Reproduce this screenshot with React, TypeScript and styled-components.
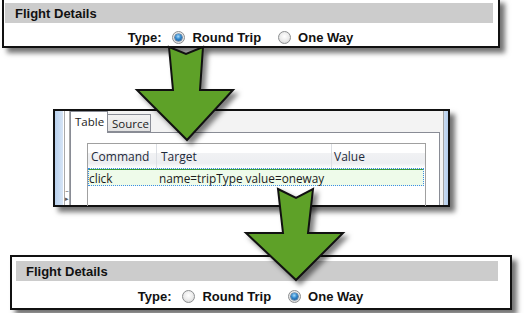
import React from "react";
import styled, { createGlobalStyle } from "styled-components";

const Global = createGlobalStyle`
  html, body { margin: 0; padding: 0; background: #fff; }
  body { width: 529px; height: 313px; overflow: hidden; }
`;

const Canvas = styled.div`
  position: relative;
  width: 529px;
  height: 313px;
  overflow: hidden;
  display: flex;
  flex-direction: column;
  align-items: flex-start;
  background: #fff;
`;

const FormPanel = styled.div<{ $left: number; $width: number; $top: number }>`
  box-sizing: border-box;
  margin-left: ${(p) => p.$left}px;
  margin-top: ${(p) => p.$top}px;
  width: ${(p) => p.$width}px;
  border: 2px solid #111;
  background: #fff;
  box-shadow: 5px 5px 5px rgba(0, 0, 0, 0.55);
  display: flex;
  flex-direction: column;
  font-family: "Liberation Sans", Arial, sans-serif;
  font-weight: bold;
  font-size: 13px;
  color: #111;
`;

const SectionHeader = styled.div<{ $ml: number; $mr: number; $mt: number }>`
  margin: ${(p) => p.$mt}px ${(p) => p.$mr}px 0 ${(p) => p.$ml}px;
  height: 20px;
  background: #cccccc;
  display: flex;
  align-items: center;
  padding-left: 10px;
`;

const TypeRow = styled.div<{ $pt: number; $pb: number }>`
  display: flex;
  align-items: center;
  justify-content: center;
  padding: ${(p) => p.$pt}px 21px ${(p) => p.$pb}px 0;
  height: 17px;
`;

const Label = styled.span`
  margin-right: 11px;
`;

const Choice = styled.label`
  display: flex;
  align-items: center;
  gap: 7px;
  & + & {
    margin-left: 17px;
  }
`;

const Radio = styled.span<{ $checked?: boolean }>`
  position: relative;
  box-sizing: border-box;
  width: 13px;
  height: 13px;
  border-radius: 50%;
  border: 1px solid #8c8e90;
  background: radial-gradient(circle at 50% 40%, #ffffff 0%, #eaeaea 55%, #c9c9c9 100%);
  &::after {
    content: "";
    display: ${(p) => (p.$checked ? "block" : "none")};
    position: absolute;
    left: 2px;
    top: 2px;
    width: 7px;
    height: 7px;
    border-radius: 50%;
    background: radial-gradient(circle at 45% 35%, #a9dcfb 0%, #2f86cc 45%, #164a85 100%);
    box-shadow: 0 0 0 0.6px #274f78;
  }
`;

/* ---------- IDE panel ---------- */

const IdePanel = styled.div`
  box-sizing: border-box;
  margin-left: 53px;
  margin-top: 61px;
  width: 397px;
  height: 98px;
  border: 2px solid #111;
  background: #fff;
  box-shadow: 5px 5px 5px rgba(0, 0, 0, 0.55);
  display: flex;
  font-family: "Open Sans", "Noto Sans", sans-serif;
  font-size: 11.8px;
  color: #1b1b1b;
`;

const LeftStrip = styled.div`
  width: 15px;
  display: flex;
`;

const BlueBar = styled.div<{ $w: number }>`
  width: ${(p) => p.$w}px;
  background: linear-gradient(to right, #b9d1ee, #d6e5f6);
`;

const Splitter = styled.div`
  box-sizing: border-box;
  margin-left: 1px;
  width: 6px;
  border-left: 1px solid #a9a9a9;
  border-right: 1px solid #a9a9a9;
  display: flex;
  flex-direction: column;
  justify-content: flex-end;
  align-items: center;
  padding-bottom: 2px;
  font-size: 7px;
  line-height: 8px;
  color: #555;
`;

const RightStrip = styled.div`
  width: 4px;
  border-left: 1px solid #a3a3a3;
  background: linear-gradient(to right, #c8daf0, #b4cdec);
`;

const Main = styled.div`
  flex: 1;
  display: flex;
  flex-direction: column;
  background: #f3f3f3;
`;

const TabRow = styled.div`
  height: 21px;
  display: flex;
  align-items: flex-end;
`;

const Tab = styled.div<{ $active?: boolean; $w: number }>`
  box-sizing: border-box;
  width: ${(p) => p.$w}px;
  height: ${(p) => (p.$active ? 22 : 18)}px;
  margin-bottom: ${(p) => (p.$active ? -1 : 0)}px;
  border: 1px solid #898c95;
  border-bottom: ${(p) => (p.$active ? "none" : "1px solid #898c95")};
  background: ${(p) => (p.$active ? "#fff" : "linear-gradient(#f3f3f3, #e2e2e2)")};
  padding-left: 4px;
  line-height: ${(p) => (p.$active ? 19 : 17)}px;
  font-size: 11.5px;
  white-space: nowrap;
  position: relative;
  z-index: ${(p) => (p.$active ? 1 : 0)};
  & + & {
    margin-left: -1px;
  }
`;

const TabBody = styled.div`
  flex: 1;
  margin-right: 3px;
  border: 1px solid #898c95;
  border-bottom: none;
  background: #fff;
  padding: 10px 13px 0 16px;
`;

const Table = styled.div`
  height: 100%;
  border: 1px solid #a0a0a0;
  border-bottom: none;
  display: flex;
  flex-direction: column;
`;

const HeadRow = styled.div`
  display: grid;
  grid-template-columns: 69px 175px 1fr;
  height: 24px;
  background: linear-gradient(
    to bottom,
    #ffffff 0%,
    #ffffff 38%,
    #f1f2f4 38%,
    #eceef1 80%,
    #ffffff 100%
  );
`;

const HeadCell = styled.div<{ $pl: number; $divider?: boolean }>`
  padding-left: ${(p) => p.$pl}px;
  display: flex;
  align-items: center;
  border-right: ${(p) => (p.$divider ? "1px solid #dcdfe4" : "none")};
  color: #1e2a3a;
  font-size: 12px;
`;

const DataRow = styled.div`
  display: grid;
  grid-template-columns: 70px 1fr;
  height: 18px;
  box-sizing: border-box;
  border: 1px dotted #3a8ee6;
  margin-right: 1px;
  background: #eefbea;
  box-shadow: inset 0 1px 0 #3c9a3c;
  align-items: center;
  padding-top: 1px;
`;

const DataCell = styled.div`
  white-space: nowrap;
`;

const ArrowLayer = styled.svg`
  position: absolute;
  left: 0;
  top: 0;
  width: 529px;
  height: 313px;
  pointer-events: none;
  filter: drop-shadow(4px 4px 2.5px rgba(0, 0, 0, 0.5));
`;

const TypeChoices: React.FC<{ oneWay: boolean; pt: number; pb: number }> = ({ oneWay, pt, pb }) => (
  <TypeRow $pt={pt} $pb={pb}>
    <Label>Type:</Label>
    <Choice>
      <Radio $checked={!oneWay} />
      Round Trip
    </Choice>
    <Choice>
      <Radio $checked={oneWay} />
      One Way
    </Choice>
  </TypeRow>
);

export default function App() {
  return (
    <Canvas>
      <Global />
      <FormPanel $left={2} $width={498} $top={-2}>
        <SectionHeader $ml={1} $mr={5} $mt={3}>Flight Details</SectionHeader>
        <TypeChoices oneWay={false} pt={6} pb={0} />
      </FormPanel>

      <IdePanel>
        <LeftStrip>
          <BlueBar $w={8} />
          <Splitter>
            <span>–</span>
            <span>▸</span>
          </Splitter>
        </LeftStrip>
        <Main>
          <TabRow>
            <Tab $active $w={38}>Table</Tab>
            <Tab $w={44}>Source</Tab>
          </TabRow>
          <TabBody>
            <Table>
              <HeadRow>
                <HeadCell $pl={3} $divider>Command</HeadCell>
                <HeadCell $pl={4} $divider>Target</HeadCell>
                <HeadCell $pl={2}>Value</HeadCell>
              </HeadRow>
              <DataRow>
                <DataCell>click</DataCell>
                <DataCell>name=tripType value=oneway</DataCell>
              </DataRow>
            </Table>
          </TabBody>
        </Main>
        <RightStrip />
      </IdePanel>

      <FormPanel $left={10} $width={502} $top={48}>
        <SectionHeader $ml={4} $mr={12} $mt={4}>Flight Details</SectionHeader>
        <TypeChoices oneWay pt={7} pb={3} />
      </FormPanel>

      <ArrowLayer viewBox="0 0 529 313">
        <polygon
          points="169,47 186,54 203,47 200,90 233,90 187,140 137,90 173,90"
          fill="#5ea128"
          stroke="#111"
          strokeWidth="2"
          strokeLinejoin="miter"
        />
        <polygon
          points="278,189 296,198 313,189 308,233 343,233 296,280 246,233 283,233"
          fill="#5ea128"
          stroke="#111"
          strokeWidth="2"
          strokeLinejoin="miter"
        />
      </ArrowLayer>
    </Canvas>
  );
}
